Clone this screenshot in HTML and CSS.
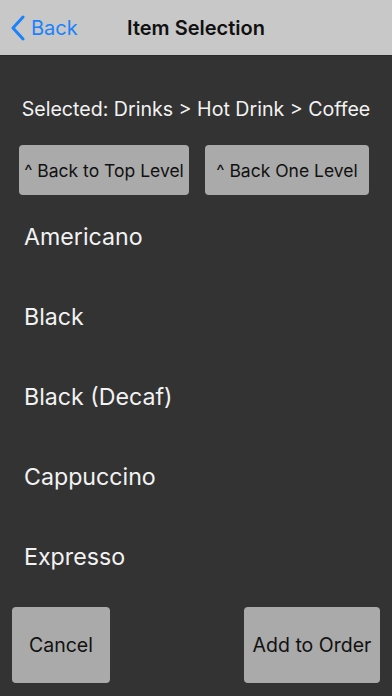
FILE: index.html
```html
<!DOCTYPE html>
<html>
<head>
<meta charset="utf-8">
<link rel="stylesheet" href="styles.css">
</head>
<body>
<div class="app">
  <header class="nav">
    <div class="back">
      <svg class="chev" width="16" height="26" viewBox="0 0 16 26"><path d="M13 2 L3 13 L13 24" fill="none" stroke="#1a82fb" stroke-width="3" stroke-linecap="round" stroke-linejoin="round"/></svg>
      <span>Back</span>
    </div>
    <div class="title">Item Selection</div>
  </header>
  <main class="content">
    <div class="selected">Selected: Drinks &gt; Hot Drink &gt; Coffee</div>
    <div class="levels">
      <button class="btn lvl lvl-top">^ Back to Top Level</button>
      <button class="btn lvl lvl-one">^ Back One Level</button>
    </div>
    <ul class="items">
      <li>Americano</li>
      <li>Black</li>
      <li>Black (Decaf)</li>
      <li>Cappuccino</li>
      <li>Expresso</li>
    </ul>
    <div class="actions">
      <button class="btn act cancel">Cancel</button>
      <button class="btn act add">Add to Order</button>
    </div>
  </main>
</div>
</body>
</html>
```

FILE: styles.css
```css
html, body {
  margin: 0;
  padding: 0;
  background: #333333;
}
body {
  font-family: Inter, "Liberation Sans", sans-serif;
  width: 392px;
  height: 696px;
  overflow: hidden;
}
.app {
  display: flex;
  flex-direction: column;
  height: 696px;
}
.nav {
  height: 55px;
  background: #c8c8c8;
  border-bottom: 1px solid #2a2a2a;
  position: relative;
  display: flex;
  align-items: center;
  justify-content: center;
}
.back {
  position: absolute;
  left: 10px;
  top: 15px;
  display: flex;
  align-items: center;
  color: #1a82fb;
  font-size: 20px;
  gap: 5px;
}
.chev { display: block; }
.title {
  font-size: 20px;
  font-weight: 600;
  color: #111;
}
.content {
  flex: 1;
  display: flex;
  flex-direction: column;
}
.selected {
  color: #f2f2f2;
  font-size: 19.6px;
  text-align: center;
  margin-top: 41px;
  line-height: 24px;
}
.levels {
  display: flex;
  margin-top: 24px;
  padding-left: 19px;
  gap: 16px;
}
.btn {
  font-family: inherit;
  background: #aaaaaa;
  border: none;
  border-radius: 4px;
  color: #111;
  padding: 0;
}
.lvl {
  height: 50px;
  font-size: 17.5px;
}
.lvl-top { width: 170px; }
.lvl-one { width: 164px; }
.items {
  list-style: none;
  margin: 2px 0 0;
  padding: 0;
}
.items li {
  height: 80px;
  line-height: 80px;
  padding-left: 24px;
  color: #f2f2f2;
  font-size: 23.2px;
}
.actions {
  display: flex;
  justify-content: space-between;
  padding: 10px 12px 0 12px;
}
.act {
  height: 76px;
  font-size: 19.5px;
}
.cancel { width: 98px; }
.add { width: 136px; }
```
